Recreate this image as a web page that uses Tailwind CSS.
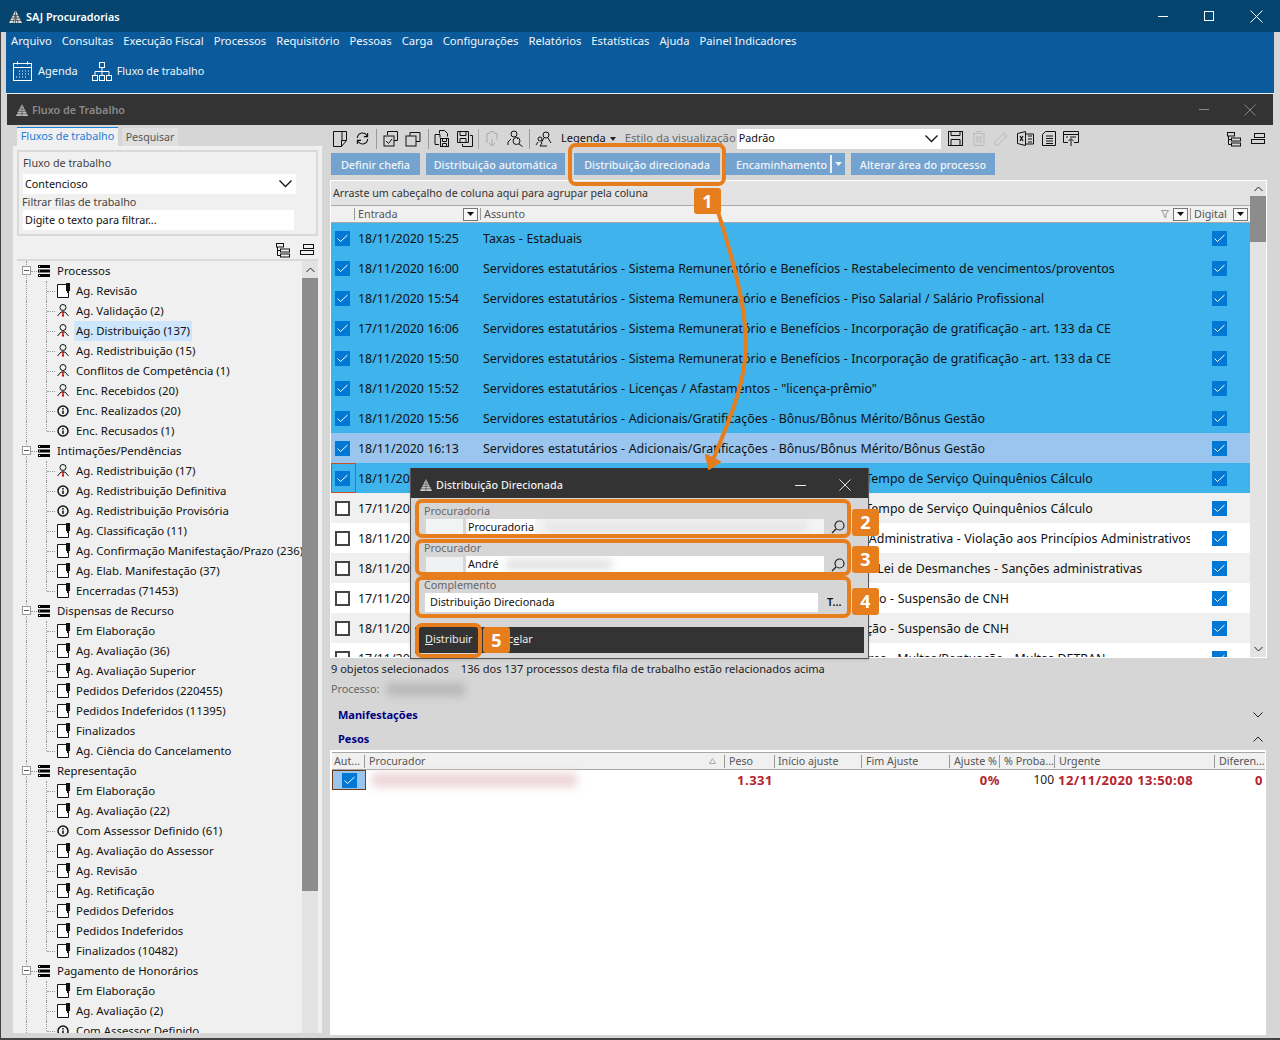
<!DOCTYPE html>
<html lang="pt-BR">
<head>
  <meta charset="UTF-8" />
  <title>SAJ Procuradorias</title>
  <script src="https://cdn.jsdelivr.net/npm/@tailwindcss/browser@4"></script>
</head>
<body class="bg-[#d6d6d6] font-['Noto_Sans',sans-serif] text-[12px] text-[#111]">
<div class="relative w-[1280px] h-[1040px] overflow-hidden bg-[#d6d6d6]">

  <!-- title bar -->
  <div class="h-[32px] bg-[#04446f] flex items-center text-white">
    <svg class="ml-[8px] w-[15px] h-[15px]" viewBox="0 0 15 15"><path d="M7.5 1 L14 14 H1 Z" fill="#ddd"/><path d="M1 11.5H14M2 9H13M3.5 6.5H11.500M7.500 1V14M5 14L7.500 5M10 14L7.500 5" stroke="#444" stroke-width=".7"/></svg>
    <span class="ml-[3px] mt-[2px] font-semibold text-[10.8px]">SAJ Procuradorias</span>
    <div class="ml-auto flex items-center">
      <div class="w-[10px] h-[1px] bg-white mr-[36px]"></div>
      <div class="w-[10px] h-[10px] border border-white mr-[36px]"></div>
      <svg class="w-[13px] h-[13px] mr-[17px]" viewBox="0 0 13 13"><path d="M.5.5l12 12M12.500.5l-12 12" stroke="#fff"/></svg>
    </div>
  </div>

  <div class="mx-[6px] w-[1268px]">
    <!-- menu and shortcuts -->
    <div class="h-[61px] bg-[#0a5a9c] text-[#f2f6fa]">
      <div class="h-[18px] flex gap-[10px] pl-[5px] items-center text-[11.2px]">
        <span>Arquivo</span><span>Consultas</span><span>Execução Fiscal</span><span>Processos</span><span>Requisitório</span><span>Pessoas</span><span>Carga</span><span>Configurações</span><span>Relatórios</span><span>Estatísticas</span><span>Ajuda</span><span>Painel Indicadores</span>
      </div>
      <div class="flex items-center h-[22px] pl-[7px] mt-[10px]">
        <svg class="w-[20px] h-[21px]" viewBox="0 0 20 21" fill="none" stroke="#fff"><rect x=".5" y="2.500" width="18" height="17"/><path d="M.5 6.500h18M4.500.5v3M14.500.5v3"/><path d="M6 10h1M9 10h1M12 10h1M15 10h1M6 13h1M9 13h1M12 13h1M15 13h1M3 16h1M6 16h1M9 16h1M12 16h1" stroke-width="1"/></svg>
        <span class="ml-[5px] text-[11px]">Agenda</span>
        <svg class="ml-[14px] w-[20px] h-[19px]" viewBox="0 0 20 19" fill="none" stroke="#fff"><rect x="7.500" y=".5" width="5" height="5"/><rect x=".5" y="13.500" width="5" height="5"/><rect x="7.500" y="13.500" width="5" height="5"/><rect x="14.500" y="13.500" width="5" height="5"/><path d="M10 5.500v8M3 13.500v-4h14v4"/></svg>
        <span class="ml-[5px] text-[10.7px]">Fluxo de trabalho</span>
      </div>
    </div>
    <div class="h-[1px] bg-[#e8eef4]"></div>

    <!-- child window -->
    <div class="ml-[1px] w-[1266px] h-[31px] bg-[#333333] flex items-center text-[#8a8a8a]">
      <svg class="ml-[8px] w-[14px] h-[14px]" viewBox="0 0 15 15"><path d="M7.500 1 L14 14 H1 Z" fill="#bbb"/><path d="M1 11.500H14M2 9H13M3.500 6.500H11.500M7.500 1V14" stroke="#444" stroke-width=".7"/></svg>
      <span class="ml-[3px] mt-[2px] font-semibold text-[10.8px]">Fluxo de Trabalho</span>
      <div class="ml-auto flex items-center">
        <div class="w-[10px] h-[1px] bg-[#8a8a8a] mr-[35px]"></div>
        <svg class="w-[12px] h-[12px] mr-[17px]" viewBox="0 0 13 13"><path d="M.5.5l12 12M12.500.5l-12 12" stroke="#8a8a8a"/></svg>
      </div>
    </div>

    <div class="flex ml-[1px] w-[1266px] h-[909px] bg-[#d6d6d6]">
      <!-- left panel -->
      <div class="ml-[6px] w-[309px] pt-[2px]">
        <div class="flex h-[19px] ml-[4px]">
          <div class="w-[101px] bg-[#f0f0f0] border-t border-[#1a7fd8] text-[#1a7fd8] text-center leading-[16px] text-[10.8px]">Fluxos de trabalho</div>
          <div class="ml-[4px] w-[56px] mt-[1px] bg-[#dfdfdf] text-[#555] text-center leading-[18px] text-[10.6px]">Pesquisar</div>
        </div>
        <div class="h-[887px] bg-[#f0f0f0] pt-[4px] px-[4px] overflow-hidden">
          <div class="h-[86px] border-2 border-[#d9d9d9] pl-[3px] relative text-[10.8px]">
            <div class="text-[#444] leading-[14px] mt-[4px] ml-[1px]">Fluxo de trabalho</div>
            <div class="ml-[1px] mt-[4px] h-[20px] w-[273px] bg-white flex items-center pl-[2px] justify-between pr-[4px]">
              <span>Contencioso</span>
              <svg class="w-[13px] h-[8px]" viewBox="0 0 13 8" fill="none" stroke="#111" stroke-width="1.300"><path d="M.5.5l6 6 6-6"/></svg>
            </div>
            <div class="text-[#444] leading-[14px] mt-[1px]">Filtrar filas de trabalho</div>
            <div class="ml-[1px] mt-[1px] h-[20px] w-[271px] bg-white flex items-center pl-[2px] pt-[1px]">Digite o texto para filtrar...</div>
          </div>
          <div class="h-[25px] pt-[4px] border-b-2 border-[#d9d9d9] flex items-center justify-end pr-[4px] gap-[9px]">
            <svg class="w-[16px] h-[16px]" viewBox="0 0 16 16" fill="none" stroke="#111"><rect x="1.500" y="1.500" width="7" height="3.500"/><rect x="5.500" y="7" width="9" height="3"/><rect x="5.500" y="12" width="9" height="3"/><path d="M2.500 5v8.500h3M2.500 8.500h3"/></svg>
            <svg class="w-[14px] h-[12px]" viewBox="0 0 14 12" fill="none" stroke="#111"><rect x="3.500" y=".5" width="10" height="4"/><rect x=".5" y="6.500" width="13" height="4"/></svg>
          </div>
          <div class="flex h-[776px] overflow-hidden relative">
            <div id="tree" class="w-[285px] overflow-hidden text-[11.4px]"></div>
            <div class="w-[16px] bg-[#e3e3e3] shrink-0">
              <div class="h-[17px] flex items-center justify-center"><svg class="w-[9px] h-[6px]" viewBox="0 0 9 6" fill="none" stroke="#222"><path d="M.5 5l4-4 4 4"/></svg></div>
              <div class="h-[613px] bg-[#8c8c8c]"></div>
            </div>
          </div>
        </div>
      </div>

      <!-- right panel -->
      <div class="ml-[8px] w-[937px]">
        <!-- toolbar -->
        <div class="h-[26px] flex items-center pt-[1px] relative">
          <svg class="ml-[3px] w-[14px] h-[16px]" viewBox="0 0 14 16" fill="none" stroke="#111"><path d="M.5.5h13v9l-5 6H.5zM8.500 15.500v-6h5M9 .5v9"/></svg>
          <svg class="ml-[9px] w-[13px] h-[15px]" viewBox="0 0 14 15" fill="none" stroke="#111" stroke-width="1.200"><path d="M1.500 7a5.500 5.500 0 0 1 10-3l1 1.500M12.500 1.500v4h-4M12.500 8a5.500 5.500 0 0 1-10 3l-1-1.500M1.500 13.500v-4h4"/></svg>
          <div class="ml-[7px] w-[1px] h-[20px] bg-[#999]"></div>
          <svg class="ml-[6px] w-[16px] h-[16px]" viewBox="0 0 16 16" fill="none" stroke="#111"><path d="M4.500 4V.5h10v9H11"/><rect x="1" y="5" width="10" height="10"/><path d="M3 10l2.500 2.500L9 8"/></svg>
          <svg class="ml-[6px] w-[16px] h-[16px]" viewBox="0 0 16 16" fill="none" stroke="#111"><path d="M5 5V1.500h10v9H11"/><rect x="1" y="5" width="10" height="10"/></svg>
          <div class="ml-[7px] w-[1px] h-[20px] bg-[#999]"></div>
          <svg class="ml-[5px] w-[15px] h-[17px]" viewBox="0 0 15 17" fill="none" stroke="#111"><path d="M5.500 3.500V.5h5l3 3v3M1 4.500h5v3M1 4.500v10h4"/><rect x="6.500" y="8.500" width="8" height="8"/><path d="M8.500 8.500v3h4v-3M8.500 16.500v-3h4v3"/></svg>
          <svg class="ml-[8px] w-[16px] h-[16px]" viewBox="0 0 16 16" fill="none" stroke="#111"><path d="M.5.5h11v11H.5zM3 .5v4h6v-4M3 11.500v-4h6v4M13 4.500h2.500v11h-10V13"/></svg>
          <div class="ml-[5px] w-[1px] h-[20px] bg-[#aaa]"></div>
          <svg class="ml-[6px] w-[15px] h-[17px]" viewBox="0 0 15 17" fill="none" stroke="#aaa"><path d="M2 13V3.500h2.500l1-2h3l1 2H12v6M7 9v7M4 13l3 3 3-3"/></svg>
          <svg class="ml-[7px] w-[17px] h-[17px]" viewBox="0 0 17 17" fill="none" stroke="#111"><circle cx="7" cy="4" r="3"/><path d="M1 15v-3l3-3M10 8l1 1"/><circle cx="9.500" cy="11" r="3.500"/><path d="M12 14l3.500 2.500"/></svg>
          <div class="ml-[5px] w-[1px] h-[20px] bg-[#999]"></div>
          <svg class="ml-[5px] w-[18px] h-[16px]" viewBox="0 0 18 16" fill="none" stroke="#111"><circle cx="11" cy="4" r="3"/><path d="M6 12l3-5M16 12l-3-5"/><circle cx="5" cy="8" r="2"/><path d="M1 14l2-3M12 15H5l2-3"/></svg>
          <span class="ml-[8px] text-[#111] text-[11px]">Legenda</span>
          <svg class="ml-[4px] w-[6px] h-[4px]" viewBox="0 0 6 4"><path d="M0 0h6L3 4z" fill="#222"/></svg>
          <span class="ml-[9px] text-[#6a6a6a] text-[11.300px] whitespace-nowrap">Estilo da visualização</span>
          <div class="ml-[1px] w-[204px] h-[20px] bg-white flex items-center justify-between pl-[2px] pr-[3px] text-[10.8px]">
            <span>Padrão</span>
            <svg class="w-[13px] h-[8px]" viewBox="0 0 13 8" fill="none" stroke="#111" stroke-width="1.300"><path d="M.5.5l6 6 6-6"/></svg>
          </div>
          <svg class="ml-[7px] w-[15px] h-[15px]" viewBox="0 0 15 15" fill="none" stroke="#111"><rect x=".5" y=".5" width="14" height="14"/><path d="M3 .5v4h9v-4M3 14.500v-6h9v6"/></svg>
          <svg class="ml-[9px] w-[14px] h-[15px]" viewBox="0 0 14 15" fill="none" stroke="#bbb"><path d="M1 2.500h12M4 .5h6M2 2.500v12h10v-12M5 5v7M7 5v7M9 5v7"/></svg>
          <svg class="ml-[8px] w-[15px] h-[15px]" viewBox="0 0 15 15" fill="none" stroke="#bbb"><path d="M1 11L10.500 1.500l3 3L4 14H1zM9 3l3 3"/></svg>
          <svg class="ml-[8px] w-[17px] h-[15px]" viewBox="0 0 17 15" fill="none" stroke="#111"><path d="M8.500 3h8v10h-8M11 5h4M11 8h4M11 11h4"/><path d="M.5 2.500l8-2v14l-8-2z"/><path d="M3 5l3 5M6 5l-3 5" stroke-width="1.200"/></svg>
          <svg class="ml-[8px] w-[14px] h-[15px]" viewBox="0 0 14 15" fill="none" stroke="#111"><path d="M3.500.5h10v14H.5v-11zM4 5h7M4 7.500h7M4 10h7M4 12.500h7"/></svg>
          <svg class="ml-[7px] w-[16px] h-[15px]" viewBox="0 0 16 15" fill="none" stroke="#111"><path d="M5 11.500H.5V.5h15v11H11M.5 3.500h15M3 6h2M7 6h6"/><path d="M8 15V8M5.500 10L8 7.500l2.500 2.500"/></svg>
          <svg class="ml-auto w-[16px] h-[16px]" viewBox="0 0 16 16" fill="none" stroke="#111"><rect x="1.500" y="1.500" width="7" height="3.500"/><rect x="5.500" y="7" width="9" height="3"/><rect x="5.500" y="12" width="9" height="3"/><path d="M2.500 5v8.500h3M2.500 8.500h3"/></svg>
          <svg class="ml-[9px] mr-[2px] w-[14px] h-[12px]" viewBox="0 0 14 12" fill="none" stroke="#111"><rect x="3.500" y=".5" width="10" height="4"/><rect x=".5" y="6.500" width="13" height="4"/></svg>
        </div>

        <!-- action buttons -->
        <div class="h-[22px] mt-[2px] flex ml-[1px] text-[10.8px] font-medium text-[#f0f5fa]">
          <div class="w-[89px] bg-[#74a3cf] flex items-center justify-center pt-[2px]">Definir chefia</div>
          <div class="ml-[6px] w-[139px] bg-[#74a3cf] flex items-center justify-center pt-[2px]">Distribuição automática</div>
          <div class="ml-[9px] w-[146px] bg-[#74a3cf] flex items-center justify-center pt-[2px]">Distribuição direcionada</div>
          <div class="ml-[6px] w-[119px] bg-[#74a3cf] flex items-center pl-[10px] pt-[2px]">
            <span>Encaminhamento</span>
            <div class="ml-[3px] -mt-[2px] w-[2px] h-[18px] bg-[#e8f0f8]"></div>
            <svg class="ml-[3px] -mt-[2px] w-[7px] h-[4px]" viewBox="0 0 7 4"><path d="M0 0h7L3.500 4z" fill="#f0f5fa"/></svg>
          </div>
          <div class="ml-[6px] w-[144px] bg-[#74a3cf] flex items-center justify-center pt-[2px]">Alterar área do processo</div>
        </div>

        <!-- grid -->
        <div class="mt-[5px] h-[478px] border border-white flex overflow-hidden">
          <div class="w-[919px] flex flex-col overflow-hidden">
            <div class="h-[24px] bg-[#e3e3e3] flex items-center pl-[2px] pt-[1px] text-[10.7px] text-[#333] shrink-0">Arraste um cabeçalho de coluna aqui para agrupar pela coluna</div>
            <div class="h-[18px] bg-[#f0f0f0] border-y border-[#a8a8a8] flex items-center text-[10.8px] text-[#555] shrink-0">
              <div class="w-[24px] h-[12px] border-r border-[#999]"></div>
              <div class="w-[126px] flex items-center pl-[3px] pr-[2px] justify-between h-[12px] border-r border-[#999]"><span>Entrada</span><div class="w-[15px] h-[13px] border border-[#777] bg-white/60 flex items-center justify-center"><svg class="w-[7px] h-[4px]" viewBox="0 0 7 4"><path d="M0 0h7L3.500 4z" fill="#111"/></svg></div></div>
              <div class="w-[710px] flex items-center pl-[3px] pr-[2px] h-[12px] border-r border-[#999]"><span>Assunto</span>
                <svg class="ml-auto mr-[4px] w-[8px] h-[8px]" viewBox="0 0 8 8" fill="none" stroke="#999"><path d="M.5.5h7L5 4v3.500L3 6.500V4z"/></svg>
                <div class="w-[15px] h-[13px] border border-[#777] bg-white/60 flex items-center justify-center"><svg class="w-[7px] h-[4px]" viewBox="0 0 7 4"><path d="M0 0h7L3.500 4z" fill="#111"/></svg></div>
              </div>
              <div class="flex-1 flex items-center pl-[3px] pr-[2px] justify-between"><span>Digital</span><div class="w-[15px] h-[13px] border border-[#777] bg-white/60 flex items-center justify-center"><svg class="w-[7px] h-[4px]" viewBox="0 0 7 4"><path d="M0 0h7L3.500 4z" fill="#111"/></svg></div></div>
            </div>
            <div id="rows"></div>
          </div>
          <div class="w-[16px] ml-auto bg-[#e3e3e3] flex flex-col shrink-0">
            <div class="h-[15px] flex items-center justify-center"><svg class="w-[9px] h-[6px]" viewBox="0 0 9 6" fill="none" stroke="#222"><path d="M.5 5l4-4 4 4"/></svg></div>
            <div class="h-[46px] bg-[#8c8c8c]"></div>
            <div class="mt-auto h-[17px] flex items-center justify-center"><svg class="w-[9px] h-[6px]" viewBox="0 0 9 6" fill="none" stroke="#222"><path d="M.5 1l4 4 4-4"/></svg></div>
          </div>
        </div>

        <!-- selection info -->
        <div class="h-[20px] mt-[1px] flex items-center text-[#222] text-[11.050px]">
          <span class="ml-[1px]">9 objetos selecionados</span>
          <span class="ml-[12px]">136 dos 137 processos desta fila de trabalho estão relacionados acima</span>
        </div>
        <div class="h-[20px] flex items-center text-[#666] text-[10.8px] relative">
          <span class="ml-[1px]">Processo:</span>
          <div class="ml-[8px] w-[78px] h-[13px] bg-[#b8b8b8] blur-[4px]"></div>
        </div>
        <div class="h-[26px] mt-[3px] flex items-center justify-between pl-[8px] pr-[4px] text-[#000080] font-bold text-[11px]">
          <span>Manifestações</span>
          <svg class="w-[10px] h-[6px]" viewBox="0 0 10 6" fill="none" stroke="#222"><path d="M.5.5l4.500 4.500 4.500-4.500"/></svg>
        </div>
        <div class="h-[22px] flex items-center justify-between pl-[8px] pr-[4px] text-[#000080] font-bold text-[11px]">
          <span>Pesos</span>
          <svg class="w-[10px] h-[6px]" viewBox="0 0 10 6" fill="none" stroke="#222"><path d="M.5 5.500l4.500-4.500 4.500 4.500"/></svg>
        </div>

        <!-- pesos grid -->
        <div class="h-[285px] w-[936px] bg-white border-t border-l border-white pl-[1px] pt-[1px]">
          <div class="h-[16px] w-[933px] bg-[#f0f0f0] border-y border-[#a8a8a8] flex items-center text-[10.7px] text-[#555] box-content">
            <div class="w-[33px] pl-[2px] h-[13px] leading-[13px] border-r border-[#999]">Aut...</div>
            <div class="w-[360px] pl-[4px] h-[13px] leading-[13px] border-r border-[#999] flex justify-between pr-[8px] items-center"><span>Procurador</span><svg class="w-[7px] h-[6px]" viewBox="0 0 7 6" fill="none" stroke="#aaa"><path d="M.5 5.500h6L3.500.5z"/></svg></div>
            <div class="w-[50px] pl-[4px] h-[13px] leading-[13px] border-r border-[#999]">Peso</div>
            <div class="w-[87px] pl-[3px] h-[13px] leading-[13px] border-r border-[#999]">Início ajuste</div>
            <div class="w-[88px] pl-[4px] h-[13px] leading-[13px] border-r border-[#999]">Fim Ajuste</div>
            <div class="w-[50px] pl-[4px] h-[13px] leading-[13px] border-r border-[#999] whitespace-nowrap overflow-hidden">Ajuste %</div>
            <div class="w-[55px] pl-[4px] h-[13px] leading-[13px] border-r border-[#999] whitespace-nowrap overflow-hidden">% Proba...</div>
            <div class="w-[160px] pl-[4px] h-[13px] leading-[13px] border-r border-[#999]">Urgente</div>
            <div class="flex-1 pl-[4px] h-[13px] leading-[13px] whitespace-nowrap overflow-hidden">Diferen...</div>
          </div>
          <div class="flex h-[20px] text-[#b5232e] font-bold text-[13px] leading-[20px] tracking-[0.5px]">
            <div class="w-[34px] h-[20px] bg-[#99c5ee] border border-[#6e3a12] flex items-center justify-center">
              <div class="w-[15px] h-[15px] bg-[#0078d4] flex items-center justify-center"><svg class="w-[11px] h-[9px]" viewBox="0 0 11 9" fill="none" stroke="#fff"><path d="M.5 4.500l3 3L10.500 1"/></svg></div>
            </div>
            <div class="w-[360px] pl-[6px] pt-[3px]"><div class="w-[205px] h-[14px] bg-[#ecd4d8] blur-[5px]"></div></div>
            <div class="w-[47px] text-right">1.331</div>
            <div class="w-[227px] text-right">0%</div>
            <div class="w-[54px] text-right font-normal text-[#222] text-[12px] tracking-normal">100</div>
            <div class="w-[144px] pl-[4px] whitespace-nowrap">12/11/2020 13:50:08</div>
            <div class="flex-1 text-right pr-[3px]">0</div>
          </div>
        </div>
      </div>
    </div>
  </div>

  <!-- window border -->
  <div class="absolute left-0 top-[32px] bottom-0 w-[1px] bg-[#444]"></div>
  <div class="absolute left-0 right-0 bottom-0 h-[2px] bg-[#444]"></div>

  <!-- modal dialog -->
  <div class="absolute left-[410px] top-[468px] w-[459px] h-[191px] bg-[#d6d6d6] border border-[#555] border-t-0 shadow-sm text-[10.8px]">
    <div class="h-[30px] pt-[4px] bg-[#333333] flex items-center text-[#eee]">
      <svg class="ml-[8px] w-[14px] h-[14px]" viewBox="0 0 15 15"><path d="M7.500 1 L14 14 H1 Z" fill="#ccc"/><path d="M1 11.500H14M2 9H13M3.500 6.500H11.500M7.500 1V14" stroke="#444" stroke-width=".7"/></svg>
      <span class="ml-[3px] font-medium">Distribuição Direcionada</span>
      <div class="ml-auto flex items-center">
        <div class="w-[11px] h-[1px] bg-[#eee] mr-[33px]"></div>
        <svg class="w-[12px] h-[12px] mr-[17px]" viewBox="0 0 13 13"><path d="M.5.5l12 12M12.500.5l-12 12" stroke="#eee"/></svg>
      </div>
    </div>
    <div class="pl-[13px] pt-[6px] h-[37px] text-[#666]">
      <div class="leading-[13px]">Procuradoria</div>
      <div class="flex h-[16px] mt-[2px] text-[#111] items-center">
        <div class="ml-[2px] w-[37px] h-[16px] bg-[#f2f4f4]"></div>
        <div class="ml-[3px] w-[358px] h-[16px] bg-[#f3f3f3] relative overflow-hidden flex items-center pl-[2px]">
          <span class="bg-white pr-[1px] relative">Procuradoria</span>
          <div class="absolute left-[80px] top-[3px] w-[260px] h-[10px] bg-[#e4e4e4] blur-[4px]"></div>
        </div>
        <svg class="ml-[7px] w-[14px] h-[14px]" viewBox="0 0 14 14" fill="none" stroke="#222" stroke-width="1.200"><circle cx="8.500" cy="5.500" r="4.500"/><path d="M5 9l-4 4"/></svg>
      </div>
    </div>
    <div class="pl-[13px] pt-[6px] h-[38px] text-[#666]">
      <div class="leading-[13px]">Procurador</div>
      <div class="flex h-[17px] mt-[2px] text-[#111] items-center">
        <div class="ml-[2px] w-[37px] h-[16px] bg-[#eef2f2]"></div>
        <div class="ml-[3px] w-[358px] h-[17px] bg-white relative overflow-hidden flex items-center pl-[2px]">
          <span class="bg-white relative">André</span>
          <div class="absolute left-[40px] top-[4px] w-[105px] h-[9px] bg-[#dcdcdc] blur-[4px]"></div>
        </div>
        <svg class="ml-[7px] w-[14px] h-[14px]" viewBox="0 0 14 14" fill="none" stroke="#222" stroke-width="1.200"><circle cx="8.500" cy="5.500" r="4.500"/><path d="M5 9l-4 4"/></svg>
      </div>
    </div>
    <div class="pl-[13px] pt-[5px] h-[54px] text-[#666]">
      <div class="leading-[14px]">Complemento</div>
      <div class="flex h-[19px] mt-[1px] text-[#111] items-center">
        <div class="ml-[1px] w-[393px] h-[19px] bg-white flex items-center pl-[5px]">Distribuição Direcionada</div>
        <span class="ml-[9px] font-semibold">T...</span>
      </div>
    </div>
    <div class="mx-[4px] h-[26px] pb-[2px] bg-[#333333] flex items-center text-[#eee]">
      <span class="ml-[10px]"><span class="underline">D</span>istribuir</span>
      <span class="ml-[16px]">Canc<span class="underline">e</span>lar</span>
    </div>
  </div>

  <!-- annotation layer -->
  <svg class="absolute left-0 top-0 w-[1280px] h-[1040px] pointer-events-none" viewBox="0 0 1280 1040" fill="none">
    <path d="M718 212C734 262 750 320 745 360C741 395 725 430 713 460" stroke="#e67e1e" stroke-width="4"/>
    <path d="M709 469L706 455L720 462Z" fill="#e67e1e" stroke="#e67e1e" stroke-width="2" stroke-linejoin="round"/>
    <rect x="570" y="145" width="154" height="39" rx="6" stroke="#e67e1e" stroke-width="4"/>
    <rect x="417" y="501" width="432" height="35" rx="5" stroke="#e67e1e" stroke-width="4"/>
    <rect x="417" y="541" width="432" height="33" rx="5" stroke="#e67e1e" stroke-width="4"/>
    <rect x="417" y="578" width="432" height="38" rx="5" stroke="#e67e1e" stroke-width="4"/>
    <rect x="417" y="625" width="63" height="31" rx="5" stroke="#e67e1e" stroke-width="4"/>
  </svg>
  <div class="absolute left-[694px] top-[188px] w-[27px] h-[26px] rounded-[3px] bg-[#e67e1e] text-white font-bold text-[18px] flex items-center justify-center">1</div>
  <div class="absolute left-[852px] top-[509px] w-[27px] h-[27px] rounded-[3px] bg-[#e67e1e] text-white font-bold text-[18px] flex items-center justify-center">2</div>
  <div class="absolute left-[852px] top-[546px] w-[27px] h-[27px] rounded-[3px] bg-[#e67e1e] text-white font-bold text-[18px] flex items-center justify-center">3</div>
  <div class="absolute left-[852px] top-[588px] w-[27px] h-[27px] rounded-[3px] bg-[#e67e1e] text-white font-bold text-[18px] flex items-center justify-center">4</div>
  <div class="absolute left-[483px] top-[627px] w-[27px] h-[26px] rounded-[3px] bg-[#e67e1e] text-white font-bold text-[18px] flex items-center justify-center">5</div>
</div>

<script>
  const docIcon = '<svg class="w-[15px] h-[16px]" viewBox="0 0 15 16" fill="none"><path d="M1.500 1.500h11v13h-11z" fill="#fff" stroke="#111"/><path d="M10 0h4v8h-1.500v2H11V8h-1z" fill="#111"/></svg>';
  const personIcon = '<svg class="w-[15px] h-[16px]" viewBox="0 0 15 16" fill="none" stroke="#111"><circle cx="7" cy="4.500" r="3"/><path d="M1.500 13l3.500-4h4l3.500 4"/><path d="M7 8.500v3" stroke="#c00" stroke-width="1.500"/><path d="M6 11.500h2v2H6z" fill="#c00" stroke="none"/></svg>';
  const infoIcon = '<svg class="w-[15px] h-[16px]" viewBox="0 0 15 16" fill="none"><circle cx="7" cy="8" r="5" stroke="#111" stroke-width="1.500"/><path d="M7 5v1.500M7 7.500v3.500" stroke="#111" stroke-width="1.500"/></svg>';
  const serverIcon = '<svg class="w-[12px] h-[12px]" viewBox="0 0 12 12"><path d="M0 0h12v3H0zM0 4.500h12v3H0zM0 9h12v3H0z" fill="#000"/><path d="M1 1.500h1M1 6h1M1 10.500h1" stroke="#fff"/></svg>';
  const icons = { d: docIcon, p: personIcon, i: infoIcon };

  const tree = [
    ['Processos', [['Ag. Revisão','d'],['Ag. Validação (2)','p'],['Ag. Distribuição (137)','p',true],['Ag. Redistribuição (15)','p'],['Conflitos de Competência (1)','p'],['Enc. Recebidos (20)','p'],['Enc. Realizados (20)','i'],['Enc. Recusados (1)','i']]],
    ['Intimações/Pendências', [['Ag. Redistribuição (17)','p'],['Ag. Redistribuição Definitiva','i'],['Ag. Redistribuição Provisória','i'],['Ag. Classificação (11)','d'],['Ag. Confirmação Manifestação/Prazo (236)','d'],['Ag. Elab. Manifestação (37)','d'],['Encerradas (71453)','d']]],
    ['Dispensas de Recurso', [['Em Elaboração','d'],['Ag. Avaliação (36)','d'],['Ag. Avaliação Superior','d'],['Pedidos Deferidos (220455)','d'],['Pedidos Indeferidos (11395)','d'],['Finalizados','d'],['Ag. Ciência do Cancelamento','d']]],
    ['Representação', [['Em Elaboração','d'],['Ag. Avaliação (22)','d'],['Com Assessor Definido (61)','i'],['Ag. Avaliação do Assessor','d'],['Ag. Revisão','d'],['Ag. Retificação','d'],['Pedidos Deferidos','d'],['Pedidos Indeferidos','d'],['Finalizados (10482)','d']]],
    ['Pagamento de Honorários', [['Em Elaboração','d'],['Ag. Avaliação (2)','d'],['Com Assessor Definido','i']]],
  ];

  let treeHtml = '';
  tree.forEach(([name, items], g) => {
    treeHtml += `<div class="relative h-[20px] flex items-center">
      <span class="absolute left-[9px] top-0 h-full border-l border-dotted border-[#999]"></span>
      <span class="absolute left-[14px] top-[10px] w-[6px] border-t border-dotted border-[#999]"></span>
      <span class="absolute left-[5px] top-[5px] w-[9px] h-[9px] border border-[#999] bg-white flex items-center justify-center"><span class="w-[5px] h-[1px] bg-[#555]"></span></span>
      <span class="ml-[21px] mt-[-1px]">${serverIcon}</span>
      <span class="ml-[7px] text-[#111] whitespace-nowrap">${name}</span></div>`;
    items.forEach(([label, icon, sel], i) => {
      const line = i === items.length - 1 ? 'h-[10px]' : 'h-full';
      treeHtml += `<div class="relative h-[20px] flex items-center">
        <span class="absolute left-[9px] top-0 h-full border-l border-dotted border-[#999]"></span>
        <span class="absolute left-[29px] top-0 ${line} border-l border-dotted border-[#999]"></span>
        <span class="absolute left-[30px] top-[10px] w-[8px] border-t border-dotted border-[#999]"></span>
        <span class="ml-[39px] shrink-0">${icons[icon]}</span>
        <span class="ml-[3px] whitespace-nowrap px-[2px] leading-[20px] ${sel ? 'bg-[#cde6fb]' : ''}">${label}</span></div>`;
    });
  });
  document.getElementById('tree').innerHTML = treeHtml;

  // last field: nudge for the part of the text that shows past the dialog
  const rows = [
    ['18/11/2020 15:25','Taxas - Estaduais',1,'sel',''],
    ['18/11/2020 16:00','Servidores estatutários - Sistema Remuneratório e Benefícios - Restabelecimento de vencimentos/proventos',1,'sel',''],
    ['18/11/2020 15:54','Servidores estatutários - Sistema Remuneratório e Benefícios - Piso Salarial / Salário Profissional',1,'sel',''],
    ['17/11/2020 16:06','Servidores estatutários - Sistema Remuneratório e Benefícios - Incorporação de gratificação - art. 133 da CE',1,'sel',''],
    ['18/11/2020 15:50','Servidores estatutários - Sistema Remuneratório e Benefícios - Incorporação de gratificação - art. 133 da CE',1,'sel',''],
    ['18/11/2020 15:52','Servidores estatutários - Licenças / Afastamentos - "licença-prêmio"',1,'sel',''],
    ['18/11/2020 15:56','Servidores estatutários - Adicionais/Gratificações - Bônus/Bônus Mérito/Bônus Gestão',1,'sel',''],
    ['18/11/2020 16:13','Servidores estatutários - Adicionais/Gratificações - Bônus/Bônus Mérito/Bônus Gestão',1,'hi',''],
    ['18/11/2020 16:10','Servidores estatutários - Adicionais/Gratificações - Adicional por Tempo de Serviço Quinquênios Cálculo',1,'focus','pl-[6px]'],
    ['17/11/2020 16:02','Servidores estatutários - Adicionais/Gratificações - Adicional por Tempo de Serviço Quinquênios Cálculo',0,'alt','pl-[6px]'],
    ['18/11/2020 15:48','Servidores estatutários - Regime Disciplinar - Improbidade Administrativa - Violação aos Princípios Administrativos',0,'','pl-[41px]'],
    ['18/11/2020 15:46','Infrações Administrativas - Trânsito e Veículos - Crimes da Lei de Desmanches - Sanções administrativas',0,'alt','pl-[53px]'],
    ['17/11/2020 15:44','Infrações Administrativas - Trânsito - Carteira de Habilitação - Suspensão de CNH',0,'','pl-[53px]'],
    ['18/11/2020 15:42','Infrações Administrativas - Trânsito - Carteira de Habilitação - Suspensão de CNH',0,'alt','pl-[53px]'],
    ['17/11/2020 15:40','Infrações Administrativas - Trânsito - Autuação de Condutores - Multas/Pontuação - Multas DETRAN',0,'','pl-[41px]'],
  ];
  const bgs = { sel: 'bg-[#3fb3ec]', focus: 'bg-[#3fb3ec]', hi: 'bg-[#99c5ee]', alt: 'bg-[#f0f0f0]', '': 'bg-white' };
  const blueBox = '<span class="w-[15px] h-[15px] bg-[#0078d4] flex items-center justify-center"><svg class="w-[11px] h-[9px]" viewBox="0 0 11 9" fill="none" stroke="#fff"><path d="M.5 4.500l3 3L10.500 1"/></svg></span>';
  const emptyBox = '<span class="w-[15px] h-[15px] bg-white border-2 border-[#444]"></span>';
  document.getElementById('rows').innerHTML = rows.map(([date, text, checked, kind, nudge]) => `
    <div class="h-[30px] flex items-center ${bgs[kind]} text-[#111] whitespace-nowrap text-[12.4px]">
      <div class="w-[25px] h-[30px] flex items-center justify-center pr-[2px] shrink-0 ${kind === 'focus' ? 'border border-[#c8501e]' : ''}">${checked ? blueBox : emptyBox}</div>
      <div class="w-[127px] pl-[2px] pt-[2px] shrink-0">${date}</div>
      <div class="w-[707px] overflow-hidden pt-[2px] shrink-0 [word-spacing:0.35px] ${nudge}">${text}</div>
      <div class="ml-[22px] shrink-0">${blueBox}</div>
    </div>`).join('');
</script>
</body>
</html>
